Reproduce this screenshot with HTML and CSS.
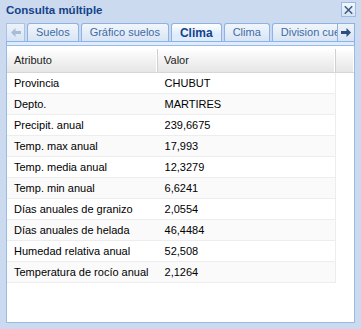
FILE: index.html
```html
<!DOCTYPE html>
<html lang="es">
<head>
  <meta charset="UTF-8">
  <title>Consulta múltiple</title>
  <link rel="stylesheet" href="styles.css">
</head>
<body>

  <div class="window">
    <div class="win-header">
      <span class="win-title">Consulta múltiple</span>
      <span class="win-close">
        <svg width="14" height="14" viewBox="0 0 14 14">
          <path d="M3 3 L11 11 M11 3 L3 11" stroke="#3c5a83" stroke-width="1.6"/>
        </svg>
      </span>
    </div>

    <div class="tabbar">
      <div class="scroller scroller-left">
        <svg width="10" height="9" viewBox="0 0 10 9"><path d="M0 4.5 L4.5 0 L4.5 3 L10 3 L10 6 L4.5 6 L4.5 9 Z" fill="#a9bcd6"/></svg>
      </div>
      <div class="tab-strip">
        <div class="tab">Suelos</div>
        <div class="tab">Gráfico suelos</div>
        <div class="tab active">Clima</div>
        <div class="tab">Clima</div>
        <div class="tab">Division cuenca</div>
      </div>
      <div class="scroller scroller-right">
        <svg width="10" height="9" viewBox="0 0 10 9"><path d="M10 4.5 L5.5 0 L5.5 3 L0 3 L0 6 L5.5 6 L5.5 9 Z" fill="#2d4e7e"/></svg>
      </div>
    </div>
    <div class="tab-spacer"></div>

    <div class="panel-body">
      <div class="grid-header">
        <div class="hcell col-attr">Atributo</div>
        <div class="hcell col-val">Valor</div>
        <div class="hcell col-fill"></div>
      </div>
      <div class="grid-rows">
        <div class="row"><div class="cell col-attr">Provincia</div><div class="cell col-val">CHUBUT</div></div>
        <div class="row alt"><div class="cell col-attr">Depto.</div><div class="cell col-val">MARTIRES</div></div>
        <div class="row"><div class="cell col-attr">Precipit. anual</div><div class="cell col-val">239,6675</div></div>
        <div class="row alt"><div class="cell col-attr">Temp. max anual</div><div class="cell col-val">17,993</div></div>
        <div class="row"><div class="cell col-attr">Temp. media anual</div><div class="cell col-val">12,3279</div></div>
        <div class="row alt"><div class="cell col-attr">Temp. min anual</div><div class="cell col-val">6,6241</div></div>
        <div class="row"><div class="cell col-attr">Días anuales de granizo</div><div class="cell col-val">2,0554</div></div>
        <div class="row alt"><div class="cell col-attr">Días anuales de helada</div><div class="cell col-val">46,4484</div></div>
        <div class="row"><div class="cell col-attr">Humedad relativa anual</div><div class="cell col-val">52,508</div></div>
        <div class="row alt"><div class="cell col-attr">Temperatura de rocío anual</div><div class="cell col-val">2,1264</div></div>
      </div>
    </div>
  </div>

</body>
</html>
```

FILE: styles.css
```css
body {
  margin: 0;
  padding: 0;
  font-family: 'Liberation Sans', Arial, sans-serif;
  background-color: #ffffff;
}

.window {
  width: 361px;
  height: 329px;
  box-sizing: border-box;
  padding: 0 6px 6px 6px;
  background-color: #cbdaee;
  display: flex;
  flex-direction: column;
}

.win-header {
  height: 22px;
  display: flex;
  justify-content: space-between;
  align-items: center;
}

.win-title {
  font-size: 11.5px;
  font-weight: bold;
  color: #15428b;
  margin-top: -2px;
}

.win-close {
  width: 15px;
  height: 15px;
  margin-right: -1px;
  margin-top: -3px;
  border: 1px solid #99bbe8;
  background: linear-gradient(#f3f7fc, #d6e3f3);
  display: flex;
  align-items: center;
  justify-content: center;
  box-sizing: border-box;
}

.tabbar {
  height: 19px;
  display: flex;
  align-items: flex-end;
  border-bottom: 1px solid #8db2e3;
}

.scroller {
  height: 18px;
  width: 19px;
  box-sizing: border-box;
  border: 1px solid #a9c3e6;
  border-bottom: none;
  background: linear-gradient(#eef3fa, #d7e4f5);
  display: flex;
  align-items: center;
  justify-content: center;
}

.scroller-right {
  width: 18px;
  border-color: #8db2e3;
}

.tab-strip {
  flex: 1;
  display: flex;
  align-items: flex-end;
  overflow: hidden;
  padding-left: 2px;
  height: 19px;
}

.tab {
  flex-shrink: 0;
  height: 18px;
  margin-right: 2px;
  padding: 0 8px;
  box-sizing: border-box;
  border: 1px solid #8db2e3;
  border-bottom: none;
  border-radius: 3px 3px 0 0;
  background: linear-gradient(#f1f6fc, #d8e5f5);
  font-size: 11px;
  line-height: 17px;
  color: #416aa3;
  white-space: nowrap;
}

.tab.active {
  height: 19px;
  margin-bottom: -1px;
  background: linear-gradient(#ffffff, #deecfd 60%);
  font-size: 12px;
  font-weight: bold;
  line-height: 19px;
  color: #15428b;
  padding: 0 8px;
}

.tab-spacer {
  height: 3px;
  background-color: #deecfd;
  border-left: 1px solid #8db2e3;
  border-right: 1px solid #8db2e3;
}

.panel-body {
  flex: 1;
  background-color: #ffffff;
  border: 1px solid #99bbe8;
}

.grid-header {
  display: flex;
  height: 23px;
  margin-top: 3px;
  background: linear-gradient(#ffffff, #f4f4f4 40%, #e6e6e6);
  border-bottom: 1px solid #d6d6d6;
}

.hcell {
  font-size: 11px;
  line-height: 23px;
  color: #222222;
  box-sizing: border-box;
  padding-left: 7px;
  border-right: 1px solid #d0d0d0;
  box-shadow: inset -1px 0 0 #ffffff;
}

.col-attr {
  width: 151px;
}

.col-val {
  width: 178px;
  padding-left: 6px;
}

.col-fill {
  flex: 1;
  border-right: none;
}

.grid-rows {
  width: 329px;
}

.row {
  display: flex;
  height: 21px;
  box-sizing: border-box;
  border-bottom: 1px solid #ededed;
  border-right: 1px solid #ededed;
}

.row.alt {
  background-color: #fafafa;
}

.cell {
  font-size: 11px;
  line-height: 20px;
  color: #000000;
  box-sizing: border-box;
  padding-left: 7px;
  white-space: nowrap;
}
```
